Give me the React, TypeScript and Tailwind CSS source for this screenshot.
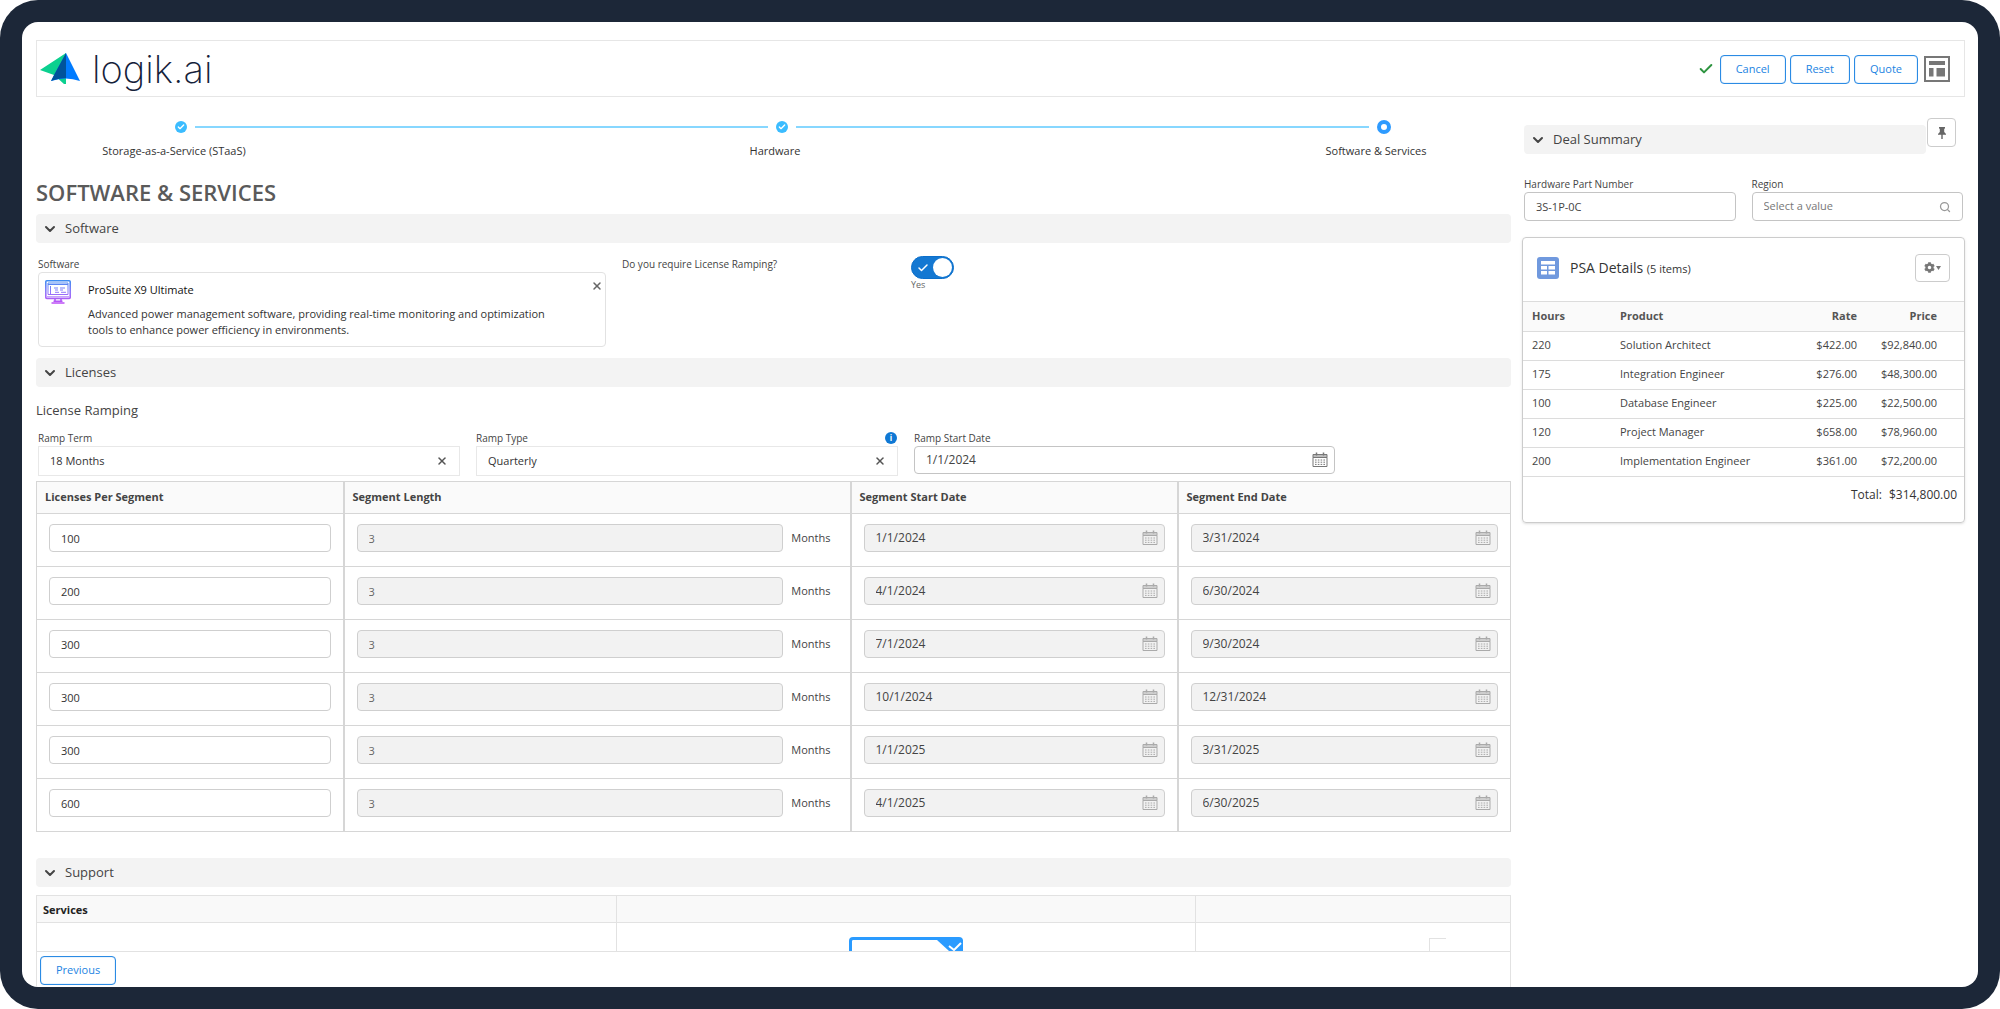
import { ReactNode } from "react";
import { Check, ChevronDown, Search, X } from "lucide-react";
import { FaCog } from "react-icons/fa";

const STEPS = [
  { label: "Storage-as-a-Service (STaaS)", done: true },
  { label: "Hardware", done: true },
  { label: "Software & Services", done: false },
];

const SEGMENTS = [
  { licenses: "100", start: "1/1/2024", end: "3/31/2024" },
  { licenses: "200", start: "4/1/2024", end: "6/30/2024" },
  { licenses: "300", start: "7/1/2024", end: "9/30/2024" },
  { licenses: "300", start: "10/1/2024", end: "12/31/2024" },
  { licenses: "300", start: "1/1/2025", end: "3/31/2025" },
  { licenses: "600", start: "4/1/2025", end: "6/30/2025" },
];

const PSA_ITEMS = [
  { hours: 220, product: "Solution Architect", rate: "$422.00", price: "$92,840.00" },
  { hours: 175, product: "Integration Engineer", rate: "$276.00", price: "$48,300.00" },
  { hours: 100, product: "Database Engineer", rate: "$225.00", price: "$22,500.00" },
  { hours: 120, product: "Project Manager", rate: "$658.00", price: "$78,960.00" },
  { hours: 200, product: "Implementation Engineer", rate: "$361.00", price: "$72,200.00" },
];

function Logo() {
  return (
    <div className="flex items-center gap-3">
      <svg className="h-8 w-10" viewBox="0 0 40 32">
        <path d="M26 0 L0 17 L14 22 L24 31 L26 31 Z" fill="#0bd08f" />
        <path d="M26 0 L40 28 Q26 23 11 28 Z" fill="#007bff" />
        <path d="M26 0 L26 25 Q21 25 14 27 L11 28 L14 22 Z" fill="#00539b" />
      </svg>
      <span className="font-['Inter','Liberation_Sans',sans-serif] text-[38px] leading-[44px] font-extralight text-[#14213a]">
        logik.ai
      </span>
    </div>
  );
}

function CalendarIcon({ className }: { className: string }) {
  return (
    <svg className={`h-4 w-4 shrink-0 ${className}`} viewBox="0 0 16 16" fill="none" stroke="currentColor">
      <path d="M4.5 0.5v3M11.5 0.5v3" strokeWidth="1.5" />
      <path d="M1 2.5h14v3H1z" fill="currentColor" fillOpacity="0.5" />
      <path d="M1 5.5h14v9H1z" />
      <path d="M3 8h10M3 10.2h10M3 12.4h10" strokeDasharray="1.6 1.2" />
    </svg>
  );
}

function MonitorIcon() {
  return (
    <svg className="h-6 w-[26px] shrink-0" viewBox="0 0 26 24" fill="none" stroke="url(#monitor)">
      <defs>
        <linearGradient id="monitor" x1="0" y1="0" x2="0" y2="24" gradientUnits="userSpaceOnUse">
          <stop offset="0" stopColor="#3b8df0" />
          <stop offset="0.5" stopColor="#8f78fa" />
          <stop offset="1" stopColor="#c04cf5" />
        </linearGradient>
      </defs>
      <rect x="0.8" y="0.8" width="24.4" height="17.6" rx="1" strokeWidth="1.6" />
      <path d="M3 3h20v11.500H3zM3 4.500h20" />
      <path d="M5.500 6v8M9 8h4M15 8h5M10 10h3M15 10h3M10 12.300h4M16 12.300h5" />
      <path d="M2 16.500h22" strokeOpacity="0.6" />
      <path d="M10 18.500v3M16 18.500v3M6.500 23h13M8.500 21.300h9" strokeWidth="1.6" />
    </svg>
  );
}

function SectionBar({ title, className = "" }: { title: string; className?: string }) {
  return (
    <button
      type="button"
      className={`flex h-[29px] items-center gap-[7px] rounded-sm bg-[#f3f3f3] px-[6px] text-left text-[13px] text-[#444] ${className}`}
    >
      <ChevronDown className="h-4 w-4" strokeWidth={3} />
      {title}
    </button>
  );
}

function OutlineButton({ children }: { children: ReactNode }) {
  return (
    <button
      type="button"
      className="h-[29px] rounded border border-[#2b8be4] bg-white px-[15px] text-[11px] text-[#1b83e2] shadow-[inset_0_0_1px_#2b8be4]"
    >
      {children}
    </button>
  );
}

function Stepper() {
  return (
    <ol className="flex h-[73px] pt-[22px] pl-[13px]">
      {STEPS.map((step, i) => (
        <li key={step.label} className={i < STEPS.length - 1 ? "flex-1" : "w-[260px]"}>
          <div className="flex h-4 items-center gap-2 pl-[126px]">
            {step.done ? (
              <span className="flex h-3 w-3 shrink-0 items-center justify-center rounded-full bg-[#3bbcff]">
                <Check className="h-2 w-2 text-white" strokeWidth={4} />
              </span>
            ) : (
              <span className="h-[14px] w-[14px] shrink-0 rounded-full border-4 border-[#2e9bff]" />
            )}
            {i < STEPS.length - 1 && <span className="-mr-[118px] h-[2px] flex-1 bg-[#87d7ff]" />}
          </div>
          <p className="mt-2 w-[250px] text-center text-[11px] leading-4 text-[#333]">{step.label}</p>
        </li>
      ))}
    </ol>
  );
}

function SoftwareSection() {
  return (
    <div className="flex items-start gap-4 px-[2px] pt-[13px]">
      <div className="w-[568px]">
        <p className="text-[10px] leading-4 text-[#444]">Software</p>
        <div className="flex h-[75px] rounded-sm border border-[#e2e2e2] pt-[7px] pr-[2px] pl-[6px]">
          <MonitorIcon />
          <div className="ml-[17px] flex-1 text-[11px] leading-4 text-[#333]">
            <p className="mt-[2px] text-[#111]">ProSuite X9 Ultimate</p>
            <p className="mt-2 max-w-[480px]">
              Advanced power management software, providing real-time monitoring and optimization tools to enhance
              power efficiency in environments.
            </p>
          </div>
          <button type="button" aria-label="Remove ProSuite X9 Ultimate" className="h-3 w-3 text-[#666]">
            <X className="h-3 w-3" strokeWidth={3} />
          </button>
        </div>
      </div>
      <label htmlFor="ramping" className="w-[273px] text-[10px] leading-4 text-[#444]">
        Do you require License Ramping?
      </label>
      <div className="text-[9px] leading-3 text-[#666]">
        <div className="relative flex h-[23px] w-11 items-center">
          <input
            id="ramping"
            type="checkbox"
            role="switch"
            defaultChecked
            className="h-[23px] w-[43px] appearance-none rounded-full border border-[#0b6fcb] bg-[#1478d2]"
          />
          <Check className="pointer-events-none absolute left-[6px] h-3 w-3 text-white" strokeWidth={3} />
          <span className="pointer-events-none absolute right-[3px] h-[19px] w-[19px] rounded-full bg-white" />
        </div>
        Yes
      </div>
    </div>
  );
}

function RampSelect({ id, label, value, info }: { id: string; label: string; value: string; info?: boolean }) {
  return (
    <div className="w-[422px]">
      <div className="flex items-center justify-between text-[10px] leading-4 text-[#444]">
        <label htmlFor={id}>{label}</label>
        {info && (
          <span className="mr-px flex h-3 w-3 items-center justify-center rounded-full bg-[#0f78d4] text-[8px] font-bold text-white">
            i
          </span>
        )}
      </div>
      <div className="flex h-[30px] items-center border border-[#e8e8e8] pr-[11px] pl-[11px]">
        <input id={id} defaultValue={value} className="min-w-0 flex-1 text-[11px] text-[#333] outline-none" />
        <button type="button" aria-label={`Clear ${label}`} className="text-[#555]">
          <X className="h-3 w-3" strokeWidth={3} />
        </button>
      </div>
    </div>
  );
}

function LockedDate({ label, value }: { label: string; value: string }) {
  return (
    <div className="flex h-7 items-center rounded-sm border border-[#cfcfcf] bg-[#f2f2f2] px-[6px]">
      <input
        aria-label={label}
        readOnly
        value={value}
        className="min-w-0 flex-1 pl-[5px] text-xs text-[#444] outline-none"
      />
      <CalendarIcon className="text-[#aaa]" />
    </div>
  );
}

function SegmentTable() {
  const th = "border border-[#d6d6d6] px-2 text-left text-[11px] font-bold text-[#444] not-first:border-l-2";
  const td = "border border-[#d6d6d6] px-3 pb-1 not-first:border-l-2";
  return (
    <table className="mt-[5px] w-full table-fixed border-collapse">
      <colgroup>
        <col className="w-[307px]" />
        <col className="w-[507px]" />
        <col className="w-[327px]" />
        <col />
      </colgroup>
      <thead>
        <tr className="h-8 bg-[#fafafa]">
          <th className={th}>Licenses Per Segment</th>
          <th className={th}>Segment Length</th>
          <th className={th}>Segment Start Date</th>
          <th className={th}>Segment End Date</th>
        </tr>
      </thead>
      <tbody>
        {SEGMENTS.map((seg, i) => (
          <tr key={seg.start} className="h-[53px]">
            <td className={td}>
              <input
                aria-label={`Licenses, segment ${i + 1}`}
                defaultValue={seg.licenses}
                className="h-7 w-full rounded-sm border border-[#cfcfcf] px-[11px] text-[11px] text-[#333]"
              />
            </td>
            <td className={td}>
              <div className="flex items-center gap-2 pr-[7px] text-[11px] text-[#444]">
                <input
                  aria-label={`Length, segment ${i + 1}`}
                  readOnly
                  value="3"
                  className="h-7 min-w-0 flex-1 rounded-sm border border-[#cfcfcf] bg-[#f2f2f2] px-[11px] text-[#666]"
                />
                Months
              </div>
            </td>
            <td className={td}>
              <LockedDate label={`Start date, segment ${i + 1}`} value={seg.start} />
            </td>
            <td className={td}>
              <LockedDate label={`End date, segment ${i + 1}`} value={seg.end} />
            </td>
          </tr>
        ))}
      </tbody>
    </table>
  );
}

function SupportTable() {
  const cell = "border border-b-0 border-[#e2e2e2] px-[6px]";
  return (
    <table className="mt-2 w-full table-fixed border-collapse">
      <colgroup>
        <col className="w-[580px]" />
        <col className="w-[579px]" />
        <col />
      </colgroup>
      <thead>
        <tr className="h-[27px] bg-[#f9f9f9]">
          <th className={`${cell} pt-[2px] text-left text-[11px] font-bold text-[#222]`}>Services</th>
          <th className={cell} />
          <th className={cell} />
        </tr>
      </thead>
      <tbody>
        <tr className="h-7 align-bottom">
          <td className={cell} />
          <td className={cell}>
            <div className="mx-auto flex h-[14px] w-[114px] justify-end rounded-t-sm border-[3px] border-r-0 border-b-0 border-[#2a9bff]">
              <svg className="h-[11px] w-[26px]" viewBox="0 0 26 11">
                <path d="M0 0H26V11H12Z" fill="#2a9bff" />
                <path d="M12 6l5 4 7-7" fill="none" stroke="#fff" strokeWidth="2" />
              </svg>
            </div>
          </td>
          <td className={cell}>
            <div className="mr-[58px] ml-auto h-[13px] w-[17px] border-t border-l border-[#e2e2e2]" />
          </td>
        </tr>
      </tbody>
    </table>
  );
}

function DealSummary() {
  return (
    <div className="flex items-start">
      <SectionBar title="Deal Summary" className="mt-[7px] ml-[2px] flex-1" />
      <button
        type="button"
        aria-label="Pin"
        className="mr-[9px] ml-px flex h-[29px] w-[29px] items-center justify-center rounded border border-[#ccc]"
      >
        <svg className="h-3 w-2" viewBox="0 0 8 12" fill="#666">
          <path d="M1 0h6v1.200L6.200 2v3L8 7v.8H4.700V12H3.300V7.800H0V7l1.800-2V2L1 1.200z" />
        </svg>
      </button>
    </div>
  );
}

function PsaCard() {
  return (
    <section className="mt-4 h-[286px] rounded border border-[#ccc] shadow-sm">
      <div className="flex h-[63px] items-center px-[14px] pb-1">
        <svg className="h-[22px] w-[22px]" viewBox="0 0 22 22">
          <rect width="22" height="22" rx="3" fill="#7099de" />
          <path
            d="M4 4h14v3.500H4zM4 9h6v3.500H4zM11.500 9H18v3.500h-6.500zM4 14h6v3.500H4zM11.500 14H18v3.500h-6.500z"
            fill="#fff"
          />
        </svg>
        <h2 className="ml-[11px] flex-1 text-sm text-[#333]">
          PSA Details <span className="text-[11px]">(5 items)</span>
        </h2>
        <button
          type="button"
          aria-label="Table settings"
          className="flex h-7 w-[35px] items-center justify-center rounded border border-[#ccc] text-[#777]"
        >
          <FaCog className="h-[11px] w-[11px]" />
          <svg className="ml-px h-[4px] w-[5px]" viewBox="0 0 5 4" fill="currentColor">
            <path d="M0 0h5L2.500 4z" />
          </svg>
        </button>
      </div>
      <table className="w-full table-fixed text-[11px] text-[#444]">
        <colgroup>
          <col className="w-[88px]" />
          <col />
          <col className="w-[90px]" />
          <col className="w-[107px]" />
        </colgroup>
        <thead>
          <tr className="h-[30px] border-y border-[#dcdcdc] bg-[#fafafa] text-[#555]">
            <th className="pl-[9px] text-left font-bold">Hours</th>
            <th className="pl-[9px] text-left font-bold">Product</th>
            <th className="text-right font-bold">Rate</th>
            <th className="pr-[27px] text-right font-bold">Price</th>
          </tr>
        </thead>
        <tbody>
          {PSA_ITEMS.map((item) => (
            <tr key={item.product} className="h-[29px] border-b border-[#dcdcdc]">
              <td className="pb-[2px] pl-[9px]">{item.hours}</td>
              <td className="pb-[2px] pl-[9px]">{item.product}</td>
              <td className="pb-[2px] text-right">{item.rate}</td>
              <td className="pr-[27px] pb-[2px] text-right">{item.price}</td>
            </tr>
          ))}
        </tbody>
      </table>
      <p className="mt-2 pr-[7px] text-right text-xs leading-5 text-[#333]">
        Total: <span className="ml-1">$314,800.00</span>
      </p>
    </section>
  );
}

export default function App() {
  return (
    <div className="min-h-screen bg-white font-['Open_Sans','Noto_Sans',sans-serif]">
      <div className="flex min-h-screen flex-col rounded-[38px] bg-[#1c2738] p-[22px]">
        <div className="flex flex-1 flex-col rounded-2xl bg-white pt-[18px] pr-[13px] pl-[14px]">
          <header className="flex h-[57px] items-center border border-[#e6e6e6] pr-[14px] pl-[3px]">
            <Logo />
            <div className="ml-auto flex items-center gap-1 pt-px">
              <Check className="mr-[2px] h-4 w-4 text-[#2e9440]" strokeWidth={3} />
              <OutlineButton>Cancel</OutlineButton>
              <OutlineButton>Reset</OutlineButton>
              <OutlineButton>Quote</OutlineButton>
              <button type="button" aria-label="Layout" className="ml-[2px]">
                <svg className="h-[26px] w-[26px]" viewBox="0 0 26 26" fill="#777">
                  <path d="M0 0h26v26H0zM2 2v22h22V2z" fillRule="evenodd" />
                  <path d="M5 5h16v4H5zM5 12h4.500v8.500H5zM12.500 12H21v8.500h-8.500z" />
                </svg>
              </button>
            </div>
          </header>

          <div className="flex flex-1 gap-[11px]">
            <main className="flex min-w-0 flex-1 flex-col">
              <Stepper />
              <h1 className="mt-[7px] mb-[7px] text-[22px] leading-[30px] font-semibold text-[#5a5a5a]">
                SOFTWARE &amp; SERVICES
              </h1>
              <SectionBar title="Software" />
              <SoftwareSection />
              <SectionBar title="Licenses" className="mt-[11px]" />
              <h2 className="mt-[13px] text-[13px] leading-5 text-[#444]">License Ramping</h2>
              <div className="mt-[10px] flex gap-4 px-[2px]">
                <RampSelect id="term" label="Ramp Term" value="18 Months" />
                <RampSelect id="type" label="Ramp Type" value="Quarterly" info />
                <div className="w-[421px]">
                  <label htmlFor="start" className="block text-[10px] leading-4 text-[#444]">
                    Ramp Start Date
                  </label>
                  <div className="flex h-7 items-center rounded-sm border border-[#c4c4c4] px-[6px]">
                    <input
                      id="start"
                      defaultValue="1/1/2024"
                      className="min-w-0 flex-1 pl-[5px] text-xs text-[#444] outline-none"
                    />
                    <CalendarIcon className="text-[#777]" />
                  </div>
                </div>
              </div>
              <SegmentTable />
              <SectionBar title="Support" className="mt-[26px]" />
              <SupportTable />
              <div className="flex-1 border border-b-0 border-[#e2e2e2] px-[3px] pt-1">
                <OutlineButton>Previous</OutlineButton>
              </div>
            </main>

            <aside className="w-[443px] pt-[21px]">
              <DealSummary />
              <div className="mt-[22px] flex gap-4 px-[2px] text-[#444]">
                <div className="min-w-0 flex-1">
                  <label htmlFor="part" className="block text-[10px] leading-4">
                    Hardware Part Number
                  </label>
                  <input
                    id="part"
                    defaultValue="3S-1P-0C"
                    className="h-[29px] w-full rounded-sm border border-[#c4c4c4] px-[11px] text-[11px]"
                  />
                </div>
                <div className="min-w-0 flex-1">
                  <label htmlFor="region" className="block text-[10px] leading-4">
                    Region
                  </label>
                  <div className="flex h-[29px] items-center rounded-sm border border-[#c4c4c4] px-[11px]">
                    <input
                      id="region"
                      placeholder="Select a value"
                      className="min-w-0 flex-1 text-[11px] outline-none placeholder:text-[#777]"
                    />
                    <Search className="h-3 w-3 text-[#999]" strokeWidth={2.5} />
                  </div>
                </div>
              </div>
              <PsaCard />
            </aside>
          </div>
        </div>
      </div>
    </div>
  );
}
